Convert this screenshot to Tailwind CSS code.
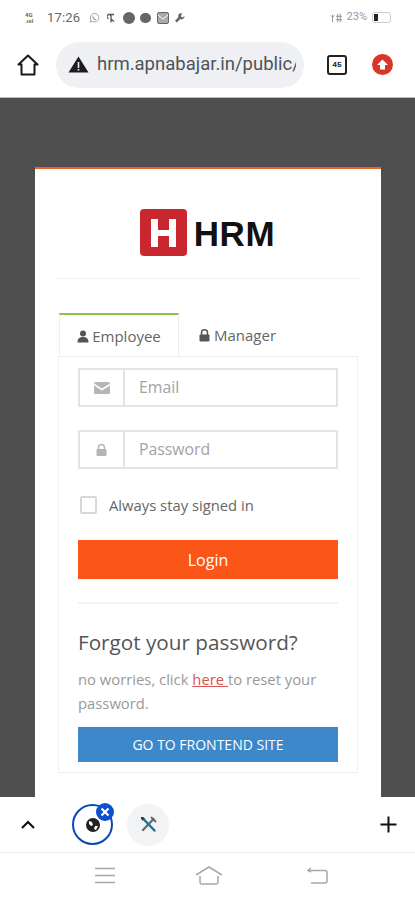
<!DOCTYPE html>
<html lang="en">
<head>
<meta charset="UTF-8">
<meta name="viewport" content="width=device-width, initial-scale=1.0">
<title>HRM Login</title>
<script src="https://cdn.jsdelivr.net/npm/@tailwindcss/browser@4"></script>
</head>
<body class="bg-white font-['Open_Sans',sans-serif] overflow-hidden">
<div class="w-[415px] h-[900px] flex flex-col">

    <!-- status bar -->
    <div class="h-[33px] shrink-0 flex items-center pl-[25px] pr-[24px] text-[#666] pt-[2px]">
        <span class="text-[6px] leading-[6px] font-bold w-[21px] font-['Roboto',sans-serif]">4G<br>.ıııl</span>
        <span class="text-[13px] ml-[1px] font-['Roboto',sans-serif] tracking-[0.2px]">17:26</span>
        <svg class="ml-[9px]" width="11" height="12" viewBox="0 0 12 12" fill="none" stroke="#999" stroke-width="1"><path d="M1.500 10.500l.7-2.400A4.600 4.600 0 1 1 4 9.800z"/><path d="M4.200 4c0 2 1.600 3.600 3.600 3.800" stroke-width="1.200"/></svg>
        <svg class="ml-[7px]" width="8" height="12" viewBox="0 0 8 12" fill="none" stroke="#555" stroke-width="1.300"><path d="M1 2.500h6M4 2.500v8M1.500 6.500a2 2 0 1 1 2.500-2M4 7l3 2.500"/></svg>
        <span class="ml-[8px] w-[12px] h-[12px] rounded-full bg-[#666]"></span>
        <span class="ml-[5px] w-[11px] h-[10px] rounded-full bg-[#666]"></span>
        <svg class="ml-[6px]" width="12" height="12" viewBox="0 0 12 12"><rect x="0.500" y="0.500" width="11" height="11" rx="1.500" fill="#aaa" stroke="#666"/><path d="M1 3l5 4 5-4" fill="none" stroke="#fff"/></svg>
        <svg class="ml-[5px]" width="12" height="12" viewBox="0 0 12 12" fill="#666"><path d="M7 1a3 3 0 0 0-2.600 4.300L1 8.700 2.800 10.500l3.500-3.400A3 3 0 0 0 10.500 4L8.700 5.500 7 4.500 7.800 1.200z"/></svg>
        <svg class="ml-auto" width="12" height="12" viewBox="0 0 14 12" fill="none" stroke="#888"><path d="M1 3l2 2 2-2M3 2v9M9 1v10M12 1v10M7 4h7M7 8h7"/></svg>
        <span class="text-[11px] ml-[5px] text-[#999] font-['Roboto',sans-serif]">23%</span>
        <span class="ml-[5px] w-[19px] h-[11px] rounded-[3px] border border-[#ccc] flex items-center pl-[1px]"><span class="w-[4px] h-[7px] bg-[#222]"></span></span>
    </div>

    <!-- browser toolbar -->
    <div class="h-[65px] shrink-0 flex items-center border-b border-[#bbb] pb-[1px]">
        <svg class="ml-[17px]" width="22" height="22" viewBox="0 0 22 22" fill="none" stroke="#1a1a1a" stroke-width="2" stroke-linejoin="round"><path d="M1.500 10.500L11 1.500l9.500 9h-3v10h-13v-10z"/></svg>
        <div class="ml-[17px] w-[248px] h-[46px] rounded-full bg-[#eef0f3] flex items-center pl-[12px] overflow-hidden">
            <svg class="shrink-0" width="21" height="17" viewBox="0 0 21 17"><path d="M10.500 0.500L20.500 16.500H0.500z" fill="#1c1c1c"/><rect x="9.700" y="6" width="1.600" height="6" fill="#eee"/><rect x="9.700" y="13" width="1.600" height="1.600" fill="#eee"/></svg>
            <span class="ml-[8px] text-[18.500px] text-[#4f5358] font-['Roboto',sans-serif] whitespace-nowrap w-[199px] overflow-hidden">hrm.apnabajar.in/public/</span>
        </div>
        <div class="ml-[23px] w-[20px] h-[20px] rounded-[3px] border-2 border-[#222] flex items-center justify-center text-[8px] font-bold text-[#222] font-['Liberation_Mono',monospace]">45</div>
        <div class="ml-[25px] w-[21px] h-[21px] rounded-full bg-[#d9352a] flex items-center justify-center">
            <svg width="13" height="13" viewBox="0 0 13 13" fill="#fff"><path d="M6.500 1.500L12 7H9v4.500H4V7H1z"/></svg>
        </div>
    </div>

    <!-- page -->
    <div class="h-[699px] shrink-0 bg-[#4f4f4f] pl-[35px] pr-[34px] pt-[69px]">
        <div class="h-[630px] bg-white border-t-[2px] border-[#f0602c] px-[21px]">
            <div class="h-[110px] border-b border-[#f2f2f2] flex items-start justify-center pt-[40px] pr-[1px]">
                <div class="w-[47px] h-[47px] rounded-[4px] bg-[#c9272e] flex items-center justify-center">
                    <svg width="25" height="28" viewBox="0 0 25 28" fill="#fff"><path d="M0 0h7v11h11V0h7v28h-7V17H7v11H0z"/></svg>
                </div>
                <span class="ml-[7px] mt-[7px] text-[35px] leading-[35px] font-bold text-[#111] tracking-[0.6px] font-['Liberation_Sans',sans-serif]">HRM</span>
            </div>

            <!-- tabs -->
            <div class="mt-[34px] ml-[3px] flex h-[43px] text-[15px] text-[#666]">
                <div class="w-[120px] -mb-[1px] h-[43px] bg-white border-t-[2px] border-t-[#8bc34a] border-x border-x-[#eee] flex items-center justify-center relative z-10 pt-[1px]">
                    <svg width="12" height="13" viewBox="0 0 12 13" fill="#555"><circle cx="6" cy="3.500" r="3"/><path d="M0.500 12.500c0-4 2-5.500 5.500-5.500s5.500 1.500 5.500 5.500z"/></svg>
                    <span class="ml-[3px]">Employee</span>
                </div>
                <div class="ml-[20px] flex items-center pt-[1px]">
                    <svg width="11" height="13" viewBox="0 0 11 13" fill="#555"><path d="M2.500 6V3.800a3 3 0 0 1 6 0V6" fill="none" stroke="#555" stroke-width="1.500"/><rect x="0.500" y="5.500" width="10" height="7" rx="1"/></svg>
                    <span class="ml-[4px]">Manager</span>
                </div>
            </div>

            <!-- tab panel -->
            <div class="ml-[2px] w-[300px] h-[417px] border border-[#f0f0f0] px-[19px] pt-[11px]">
                <div class="flex h-[39px] border-2 border-[#e4e4e4]">
                    <div class="w-[45px] shrink-0 border-r-2 border-[#e4e4e4] flex items-center justify-center">
                        <svg width="16" height="12" viewBox="0 0 16 12" fill="#b5b5b5"><path d="M0 1.500A1.500 1.500 0 0 1 1.500 0h13A1.500 1.500 0 0 1 16 1.500L8 6.500 0 1.500z"/><path d="M0 3.500l8 5 8-5V10.500a1.500 1.500 0 0 1-1.500 1.500h-13A1.500 1.500 0 0 1 0 10.500z"/></svg>
                    </div>
                    <span class="pl-[14px] leading-[34px] text-[15.800px] text-[#a3a3a3]">Email</span>
                </div>
                <div class="flex h-[39px] mt-[23px] border-2 border-[#e4e4e4]">
                    <div class="w-[45px] shrink-0 border-r-2 border-[#e4e4e4] flex items-center justify-center">
                        <svg width="11" height="12" viewBox="0 0 11 12" fill="#b5b5b5"><path d="M2.500 5.500V3.500a3 3 0 0 1 6 0v2" fill="none" stroke="#b5b5b5" stroke-width="1.500"/><rect x="0.500" y="5" width="10" height="7" rx="1"/></svg>
                    </div>
                    <span class="pl-[14px] leading-[34px] text-[15.800px] text-[#a3a3a3]">Password</span>
                </div>
                <div class="flex items-center mt-[27px] ml-[2px] h-[18px]">
                    <div class="w-[17px] h-[18px] rounded-[2px] border-2 border-[#d8d8d8]"></div>
                    <span class="ml-[12px] text-[14.800px] text-[#666]">Always stay signed in</span>
                </div>
                <div class="mt-[26px] h-[39px] bg-[#fb5617] text-white text-[16px] flex items-center justify-center">Login</div>
                <div class="mt-[23px] border-t-2 border-[#f3f3f3]"></div>
                <h2 class="mt-[22px] text-[20.700px] leading-[32px] text-[#555]">Forgot your password?</h2>
                <p class="mt-[9px] text-[14.800px] leading-[24px] text-[#999]">no worries, click <span class="text-[#d9534f] underline">here </span>to reset your password.</p>
                <div class="mt-[12px] h-[35px] bg-[#3d87cb] text-white text-[14px] flex items-center justify-center">GO TO FRONTEND SITE</div>
            </div>
        </div>
    </div>

    <!-- tab switcher -->
    <div class="h-[56px] shrink-0 flex items-center border-b border-[#eee] relative">
        <svg class="ml-[21px]" width="14" height="9" viewBox="0 0 14 9" fill="none" stroke="#111" stroke-width="2.200"><path d="M1 8l6-6 6 6"/></svg>
        <div class="ml-[37px] w-[41px] h-[41px] rounded-full border-2 border-[#0b46b8] flex items-center justify-center relative">
            <svg width="14" height="14" viewBox="0 0 14 14"><circle cx="7" cy="7" r="7" fill="#222"/><path d="M3 3l3 1 1 3-2 1-2-2zM9 8l3 0-2 4-2-1z" fill="#fff"/></svg>
            <div class="absolute -top-[3px] -right-[3px] w-[18px] h-[18px] rounded-full bg-[#0b50cc] flex items-center justify-center">
                <svg width="10" height="10" viewBox="0 0 10 10" stroke="#fff" stroke-width="2.200"><path d="M1.500 1.500l7 7M8.500 1.500l-7 7"/></svg>
            </div>
        </div>
        <div class="ml-[14px] w-[42px] h-[42px] rounded-full bg-[#f1f3f4] flex items-center justify-center">
            <svg width="17" height="17" viewBox="0 0 17 17" fill="none" stroke-linecap="round"><path d="M13.500 3L3 14" stroke="#666" stroke-width="2.200"/><path d="M11.500 1.500l4 4" stroke="#666" stroke-width="1.800"/><path d="M3 2.500l11.500 12" stroke="#17759a" stroke-width="2.500"/><path d="M1.500 1.500l2.500 1M1.500 1.500l1 2.500" stroke="#222" stroke-width="1.200"/></svg>
        </div>
        <svg class="ml-auto mr-[18px]" width="17" height="17" viewBox="0 0 17 17" stroke="#111" stroke-width="2"><path d="M8.500 0.500v16M0.500 8.500h16"/></svg>
    </div>

    <!-- android nav -->
    <div class="flex-1 flex items-center pb-[3px]">
        <svg class="ml-[95px]" width="20" height="17" viewBox="0 0 20 17" stroke="#a8a8a8" stroke-width="1.500"><path d="M0 1.500h20M0 8.500h20M0 15.500h20"/></svg>
        <svg class="ml-[80px]" width="28" height="19" viewBox="0 0 28 19" fill="none" stroke="#a8a8a8" stroke-width="1.500"><path d="M1 9L14 1l13 8M5 10v6a2 2 0 0 0 2 2h14a2 2 0 0 0 2-2v-6"/></svg>
        <svg class="ml-[84px]" width="21" height="17" viewBox="0 0 21 17" fill="none" stroke="#a8a8a8" stroke-width="1.500"><path d="M4 1L1 3.500 4 5M1 3.500h17a2 2 0 0 1 2 2V14a2 2 0 0 1-2 2H4"/></svg>
    </div>
</div>
</body>
</html>
